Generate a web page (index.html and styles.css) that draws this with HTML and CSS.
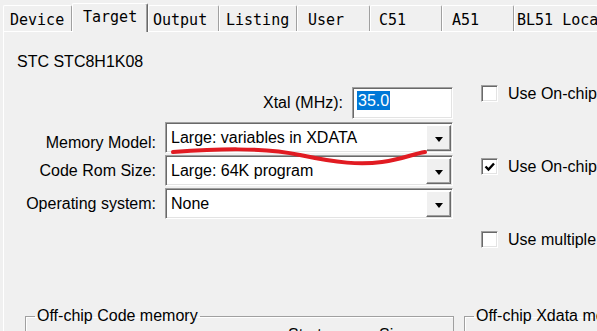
FILE: index.html
```html
<!DOCTYPE html>
<html lang="en">
<head>
    <meta charset="UTF-8">
    <title>Options for Target</title>
    <link rel="stylesheet" href="styles.css">
</head>
<body>
<div class="tabs">
    <div class="tab t-device">Device</div>
    <div class="tab t-target select">Target</div>
    <div class="tab t-output">Output</div>
    <div class="tab t-listing">Listing</div>
    <div class="tab t-user">User</div>
    <div class="tab t-c51">C51</div>
    <div class="tab t-a51">A51</div>
    <div class="tab t-bl51">BL51 Locate</div>
</div>
<div class="panel">
    <div class="chip">STC STC8H1K08</div>
    <div class="main">
        <div class="form">
            <div class="xtal">
                <span>Xtal (MHz):</span>
                <div class="edit"><span class="sel">35.0</span></div>
            </div>
            <div class="grid">
                <label class="low">Memory Model:</label>
                <div class="combo"><span>Large: variables in XDATA</span><b class="btn"><i></i></b></div>
                <label>Code Rom Size:</label>
                <div class="combo"><span>Large: 64K program</span><b class="btn"><i></i></b></div>
                <label>Operating system:</label>
                <div class="combo"><span>None</span><b class="btn"><i></i></b></div>
            </div>
        </div>
        <div class="options">
            <div class="opt"><span class="check"></span><span>Use On-chip ROM (0x0-0x1FFF)</span></div>
            <div class="opt">
                <span class="check">
                    <svg width="15" height="15" viewBox="0 0 15 15"><polyline points="3.5,7.5 6.5,10.5 12,4.5" fill="none" stroke="#000" stroke-width="2.4"/></svg>
                </span>
                <span>Use On-chip XRAM (0x0-0x3FF)</span>
            </div>
            <div class="opt"><span class="check"></span><span>Use multiple DPTR registers</span></div>
        </div>
    </div>
    <div class="groups">
        <fieldset class="code">
            <legend>Off-chip Code memory</legend>
            <div class="heads"><span>Start:</span><span>Size:</span></div>
        </fieldset>
        <fieldset class="xdata">
            <legend>Off-chip Xdata memory</legend>
        </fieldset>
    </div>
</div>
<!-- red pen mark drawn over the dialog -->
<svg class="mark" width="597" height="331" viewBox="0 0 597 331">
    <path d="M173 152 C215 149 262 147 300 155 S360 165 382 162 S412 154 425 152" fill="none" stroke="#e11b22" stroke-width="4" stroke-linecap="round"/>
</svg>
</body>
</html>
```

FILE: styles.css
```css
*{
    padding: 0;
    margin: 0;
    box-sizing: border-box;
}
html,body{
    overflow: hidden;
}
body{
    width: 597px;
    height: 331px;
    position: relative;
    background: #f0f0f0;
    color: #000;
    font-family: "Liberation Sans", Arial, sans-serif;
    font-size: 16px;
    line-height: 18px;
}
.tabs{
    display: flex;
    align-items: flex-end;
    height: 31px;
    padding-left: 3px;
    font-family: "DejaVu Sans Mono", monospace;
    font-size: 15px;
    white-space: nowrap;
}
.tab{
    flex: none;
    height: 26px;
    padding-top: 5px;
    border-top: 1px solid #fff;
    border-left: 1px solid #fff;
    border-right: 1px solid #a0a0a0;
    border-radius: 2px 2px 0 0;
    overflow: hidden;
}
.tab.select{
    height: 29px;
    margin-bottom: -1px;
    padding-top: 4px;
    border-right: 1px solid #696969;
    box-shadow: inset -1px 0 #a0a0a0;
    background: #f0f0f0;
    position: relative;
    z-index: 1;
}
.t-device{ width: 69px; padding-left: 6px; }
.t-target{ width: 76px; padding-left: 10px; }
.t-output{ width: 71px; padding-left: 4px; }
.t-listing{ width: 78px; padding-left: 6px; }
.t-user{ width: 73px; padding-left: 10px; }
.t-c51{ width: 72px; padding-left: 8px; }
.t-a51{ width: 72px; padding-left: 9px; }
.t-bl51{ width: 110px; padding-left: 2px; }

.panel{
    margin-left: 3px;
    height: 300px;
    border-top: 1px solid #fff;
    border-left: 1px solid #fff;
    padding: 21px 0 0 13px;
}
.main{
    display: flex;
    margin-top: 14px;
}
.form{
    flex: none;
    width: 436px;
    padding-top: 2px;
}
.xtal{
    display: flex;
    justify-content: flex-end;
    align-items: center;
    gap: 9px;
    height: 32px;
}
.edit,.combo,.check{
    background: #fff;
    border: 1px solid;
    border-color: #a0a0a0 #fff #fff #a0a0a0;
    box-shadow: inset 1px 1px #696969, inset -1px -1px #e3e3e3;
}
.edit{
    width: 101px;
    height: 32px;
    padding: 3px 0 0 4px;
}
.sel{
    display: inline-block;
    padding: 0 1px;
    line-height: 19px;
    background: #0078d7;
    color: #fff;
}
.grid{
    display: grid;
    grid-template-columns: 139px 288px;
    grid-auto-rows: 31px;
    column-gap: 9px;
    row-gap: 2px;
    margin-top: 3px;
}
.grid label{
    align-self: center;
    text-align: right;
    white-space: nowrap;
}
.grid label.low{
    padding-top: 10px;
}
.combo{
    display: flex;
    align-items: center;
    padding: 2px 1px 1px 5px;
}
.combo span{
    flex: 1;
    white-space: nowrap;
    overflow: hidden;
}
.btn{
    flex: none;
    width: 25px;
    align-self: stretch;
    display: flex;
    align-items: center;
    justify-content: center;
    background: #f0f0f0;
    border: 1px solid;
    border-color: #fff #696969 #696969 #fff;
    box-shadow: inset -1px -1px #a0a0a0;
}
.btn i{
    width: 0;
    height: 0;
    margin-top: 2px;
    border-top: 5px solid #000;
    border-left: 4px solid transparent;
    border-right: 4px solid transparent;
}
.options{
    display: flex;
    flex-direction: column;
    gap: 55px;
    margin-left: 28px;
    white-space: nowrap;
}
.opt{
    display: flex;
    align-items: flex-start;
    gap: 10px;
}
.check{
    flex: none;
    width: 17px;
    height: 17px;
}
.check svg{
    display: block;
}
.groups{
    display: flex;
    gap: 10px;
    margin: 58px 0 0 8px;
}
fieldset{
    flex: none;
    min-width: 0;
    height: 60px;
    padding: 0 0 0 9px;
    border: 1px solid #a0a0a0;
    box-shadow: inset 1px 1px #fff;
}
legend{
    padding: 0 2px;
}
.code{
    width: 429px;
}
.xdata{
    width: 300px;
}
.heads{
    display: grid;
    grid-template-columns: 91px auto;
    padding-left: 253px;
    margin-top: 1px;
}
.mark{
    position: absolute;
    left: 0;
    top: 0;
    pointer-events: none;
}
```
